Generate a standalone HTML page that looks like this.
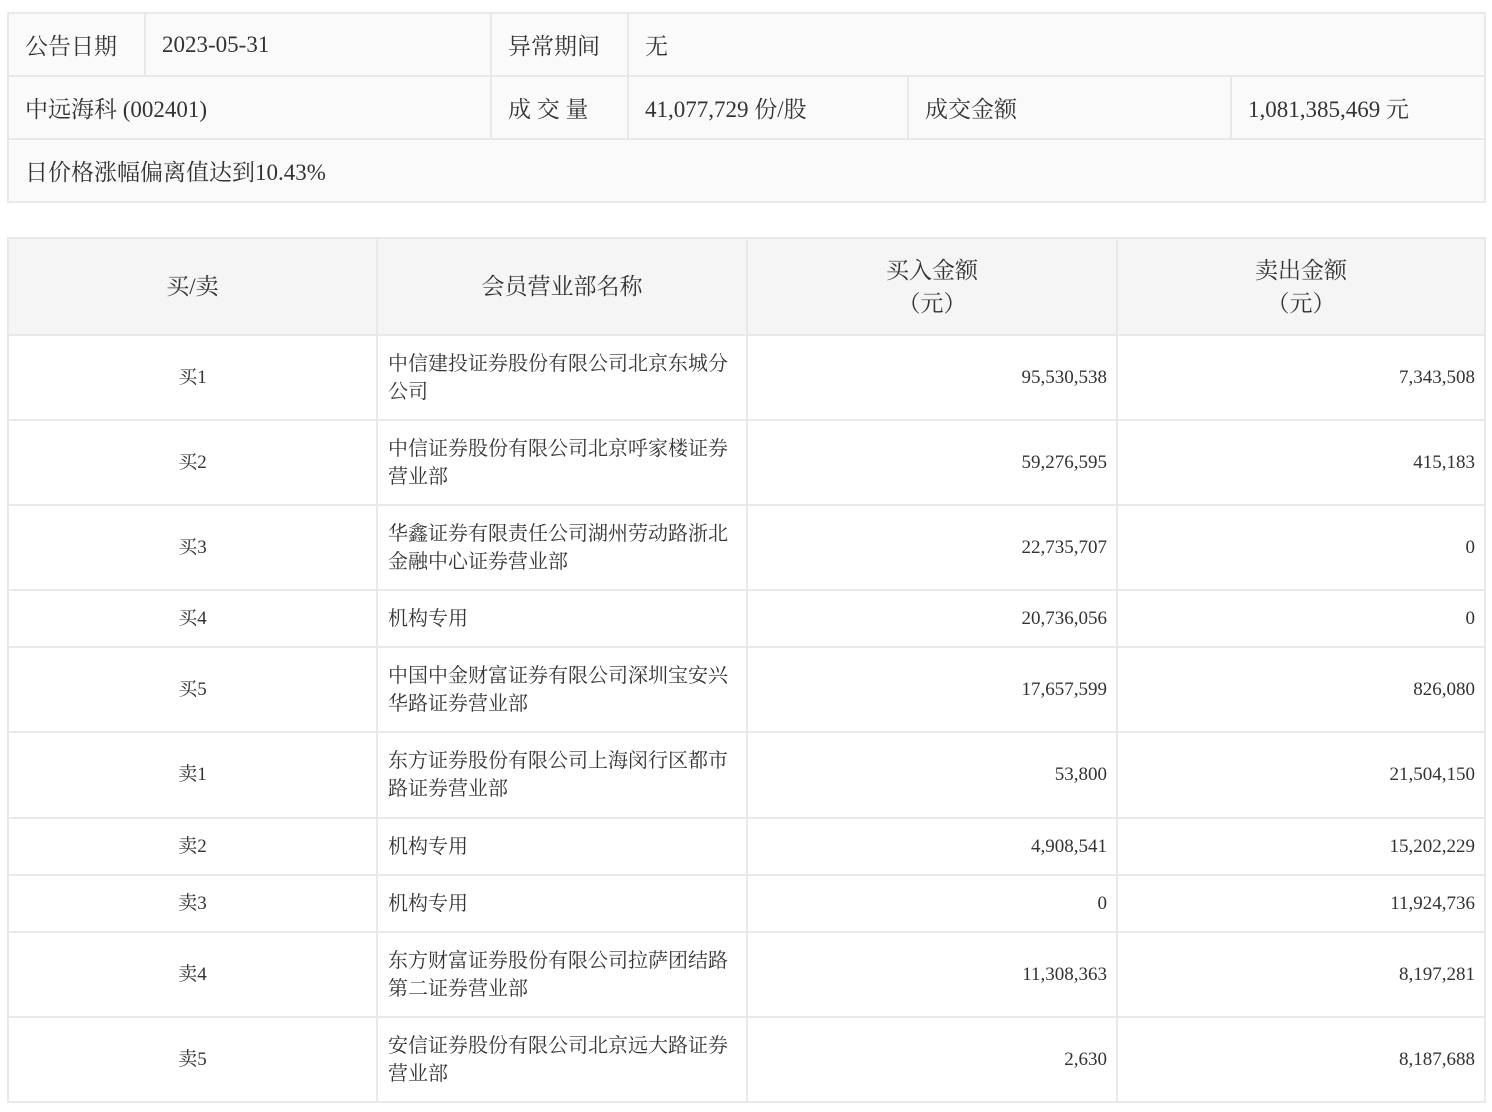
<!DOCTYPE html>
<html><head><meta charset="utf-8"><style>
body{margin:0;background:#fff;width:1492px;height:1112px;overflow:hidden;font-family:"Liberation Serif","Noto Serif CJK SC",serif;color:#333;}
table{border-collapse:collapse;position:absolute;left:7px;width:1479px;table-layout:fixed;}
td,th{border:2px solid #e9e9e9;padding:0;}
#t1{top:12px;background:#fafafa;font-size:23px;}
#t1 td{padding-left:16px;height:61px;}
#t2{top:237px;font-size:19px;}
#t2 th{background:#f5f5f5;font-weight:normal;font-size:23px;height:95px;line-height:33px;}
#t2 td{vertical-align:middle;line-height:28px;}
#t2 td.c{text-align:center}
#t2 td.n{padding-left:10px;padding-right:18px;font-size:20px}
#t2 td.r{text-align:right;padding-right:9px}
</style></head><body>
<table id="t1">
<colgroup><col style="width:137px"><col style="width:346px"><col style="width:137px"><col style="width:280px"><col style="width:323px"><col></colgroup>
<tr><td>公告日期</td><td>2023-05-31</td><td>异常期间</td><td colspan="3">无</td></tr>
<tr><td colspan="2">中远海科 (002401)</td><td>成 交 量</td><td>41,077,729 份/股</td><td>成交金额</td><td>1,081,385,469 元</td></tr>
<tr><td colspan="6">日价格涨幅偏离值达到10.43%</td></tr>
</table>
<table id="t2">
<colgroup><col style="width:369px"><col style="width:370px"><col style="width:370px"><col></colgroup>
<tr><th>买/卖</th><th>会员营业部名称</th><th>买入金额<br>（元）</th><th>卖出金额<br>（元）</th></tr>
<tr style="height:85px"><td class="c">买1</td><td class="n">中信建投证券股份有限公司北京东城分公司</td><td class="r">95,530,538</td><td class="r">7,343,508</td></tr>
<tr style="height:85px"><td class="c">买2</td><td class="n">中信证券股份有限公司北京呼家楼证券营业部</td><td class="r">59,276,595</td><td class="r">415,183</td></tr>
<tr style="height:85px"><td class="c">买3</td><td class="n">华鑫证券有限责任公司湖州劳动路浙北金融中心证券营业部</td><td class="r">22,735,707</td><td class="r">0</td></tr>
<tr style="height:57px"><td class="c">买4</td><td class="n">机构专用</td><td class="r">20,736,056</td><td class="r">0</td></tr>
<tr style="height:85px"><td class="c">买5</td><td class="n">中国中金财富证券有限公司深圳宝安兴华路证券营业部</td><td class="r">17,657,599</td><td class="r">826,080</td></tr>
<tr style="height:86px"><td class="c">卖1</td><td class="n">东方证券股份有限公司上海闵行区都市路证券营业部</td><td class="r">53,800</td><td class="r">21,504,150</td></tr>
<tr style="height:57px"><td class="c">卖2</td><td class="n">机构专用</td><td class="r">4,908,541</td><td class="r">15,202,229</td></tr>
<tr style="height:57px"><td class="c">卖3</td><td class="n">机构专用</td><td class="r">0</td><td class="r">11,924,736</td></tr>
<tr style="height:85px"><td class="c">卖4</td><td class="n">东方财富证券股份有限公司拉萨团结路第二证券营业部</td><td class="r">11,308,363</td><td class="r">8,197,281</td></tr>
<tr style="height:85px"><td class="c">卖5</td><td class="n">安信证券股份有限公司北京远大路证券营业部</td><td class="r">2,630</td><td class="r">8,187,688</td></tr>
</table>
</body></html>
